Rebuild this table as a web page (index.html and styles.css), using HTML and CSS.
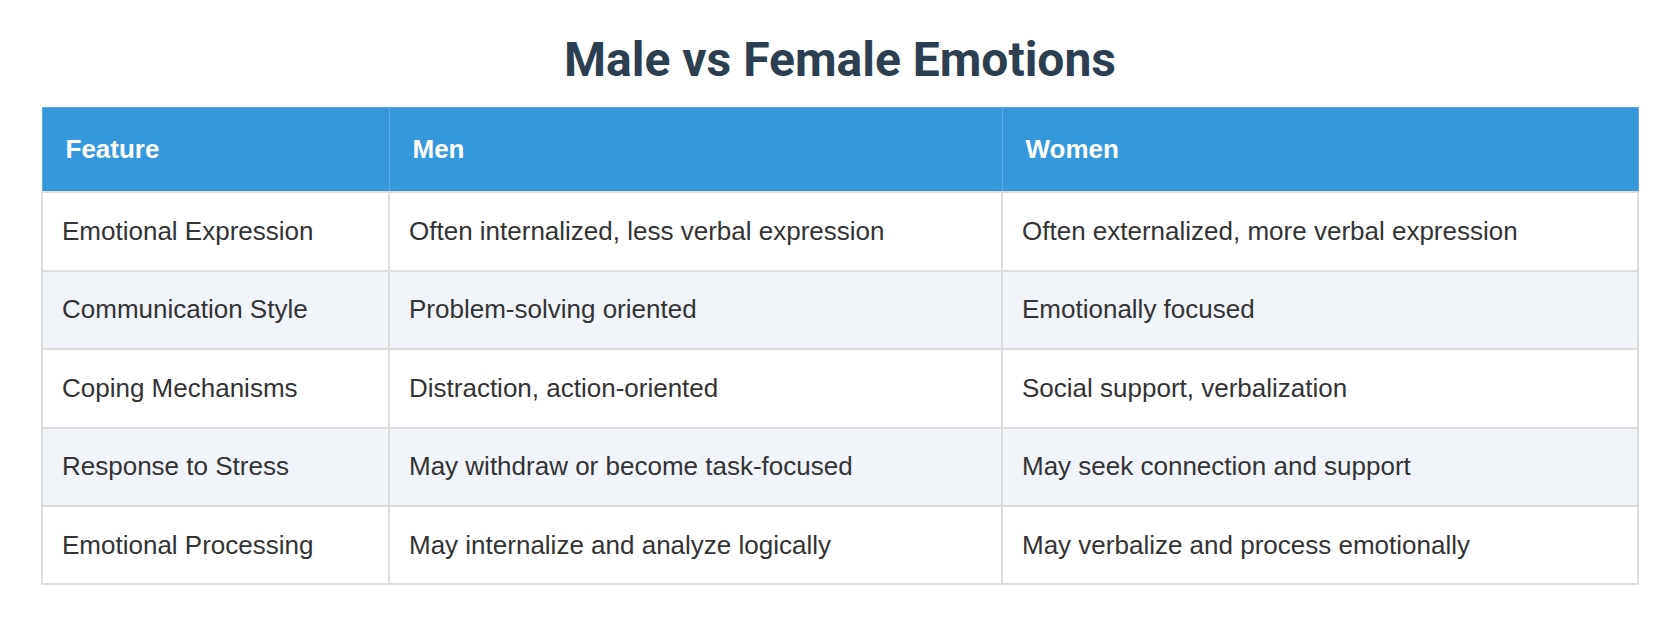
FILE: index.html
```html
<!DOCTYPE html>
<html lang="en">
<head>
<meta charset="utf-8">
<title>Male vs Female Emotions</title>
<link rel="stylesheet" href="styles.css">
</head>
<body>
<main class="page">
  <h1 class="title">Male vs Female Emotions</h1>
  <table class="compare">
    <colgroup>
      <col class="col-feature">
      <col class="col-men">
      <col class="col-women">
    </colgroup>
    <thead>
      <tr>
        <th>Feature</th>
        <th>Men</th>
        <th>Women</th>
      </tr>
    </thead>
    <tbody>
      <tr>
        <td>Emotional Expression</td>
        <td>Often internalized, less verbal expression</td>
        <td>Often externalized, more verbal expression</td>
      </tr>
      <tr>
        <td>Communication Style</td>
        <td>Problem-solving oriented</td>
        <td>Emotionally focused</td>
      </tr>
      <tr>
        <td>Coping Mechanisms</td>
        <td>Distraction, action-oriented</td>
        <td>Social support, verbalization</td>
      </tr>
      <tr>
        <td>Response to Stress</td>
        <td>May withdraw or become task-focused</td>
        <td>May seek connection and support</td>
      </tr>
      <tr>
        <td>Emotional Processing</td>
        <td>May internalize and analyze logically</td>
        <td>May verbalize and process emotionally</td>
      </tr>
    </tbody>
  </table>
</main>
</body>
</html>
```

FILE: styles.css
```css
html, body {
  margin: 0;
  padding: 0;
  background: #ffffff;
}

.page {
  padding: 31px 41px 0 41px;
  font-family: "Liberation Sans", Arial, sans-serif;
}

.title {
  margin: 0 0 19px 0;
  font-family: Roboto, "Liberation Sans", sans-serif;
  font-weight: 700;
  font-size: 48px;
  line-height: normal;
  text-align: center;
  color: #2c3e50;
}

.compare {
  width: 100%;
  border-collapse: collapse;
  table-layout: fixed;
  font-size: 26px;
}

.col-feature { width: 347px; }
.col-men { width: 613px; }
.col-women { width: auto; }

.compare th {
  background: #3498db;
  color: #ffffff;
  font-weight: 700;
  text-align: left;
  line-height: 29.4px;
  padding: 27px 23px;
  border: 1px solid #5eaae0;
}

.compare td {
  color: #333333;
  text-align: left;
  line-height: 29.4px;
  padding: 23.5px 19px;
  border: 2px solid #dddddd;
}

.compare tbody tr:nth-child(even) td {
  background: #f1f4f9;
}
```
